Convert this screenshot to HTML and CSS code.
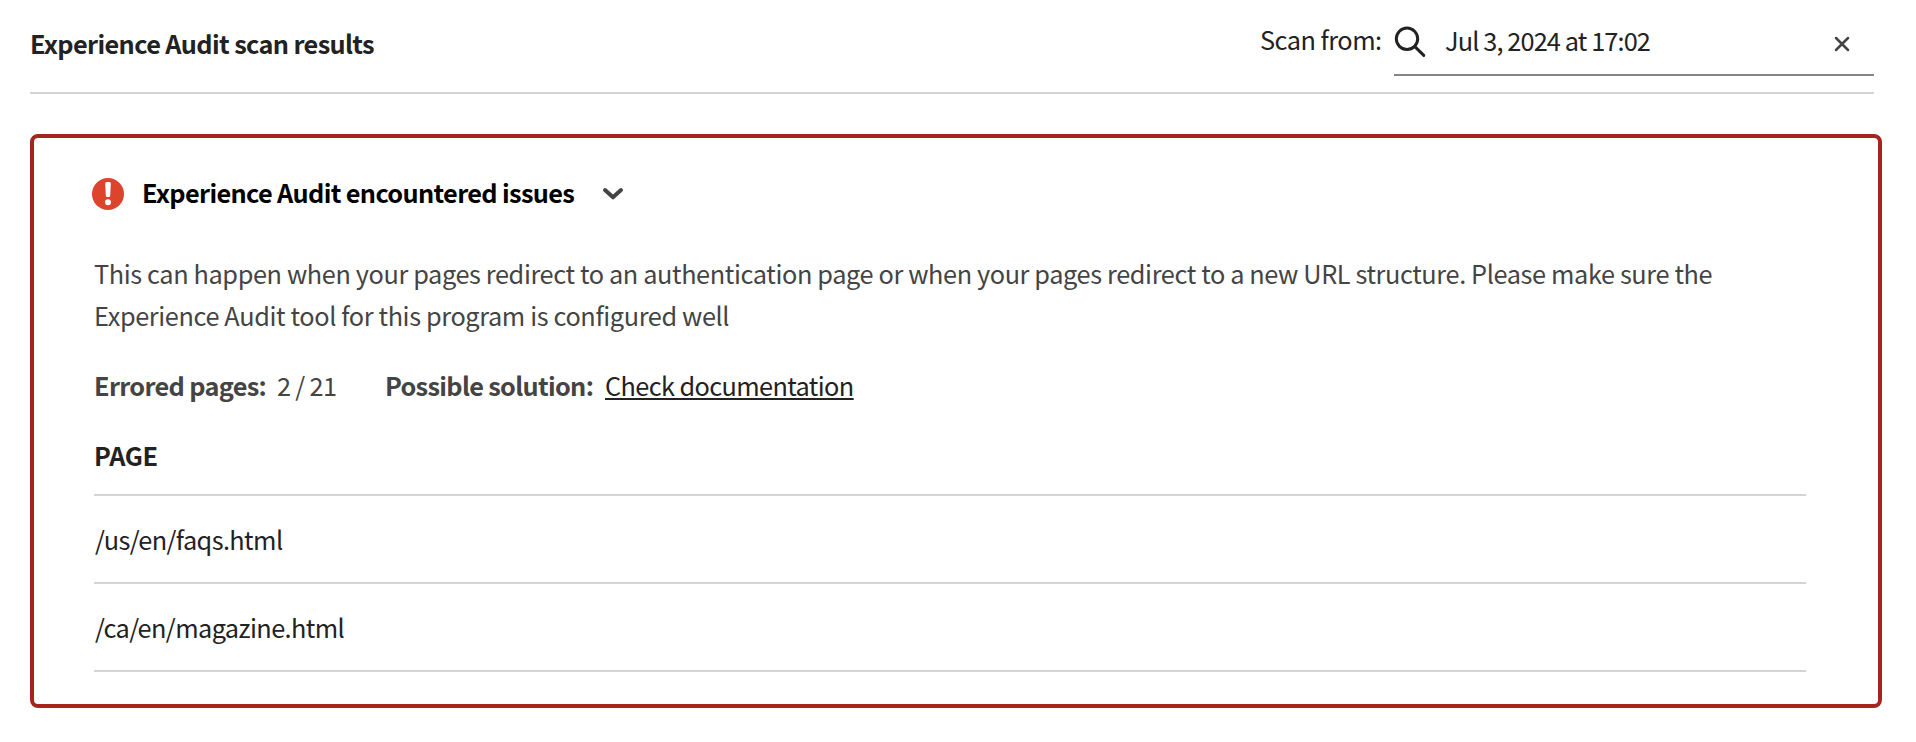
FILE: index.html
```html
<!DOCTYPE html>
<html lang="en">
<head>
<meta charset="utf-8">
<title>Experience Audit scan results</title>
<link rel="stylesheet" href="styles.css">
</head>
<body>
<header class="header">
  <h1 class="title">Experience Audit scan results</h1>
  <div class="scan">
    <span class="scan-label">Scan from:</span>
    <div class="field">
      <svg class="icon-search" width="32" height="32" viewBox="0 0 32 32" fill="none" stroke="#222" stroke-width="3" stroke-linecap="round"><circle cx="13" cy="12.8" r="10.7"/><path d="M20.8 20.6L29.8 29.4"/></svg>
      <span class="field-value">Jul 3, 2024 at 17:02</span>
      <svg class="icon-close" width="16" height="16" viewBox="0 0 16 16" fill="none" stroke="#444" stroke-width="2.5" stroke-linecap="round"><path d="M2 2L14 14M14 2L2 14"/></svg>
    </div>
  </div>
</header>
<main class="alert">
  <div class="alert-head">
    <svg class="icon-alert" width="32" height="32" viewBox="0 0 32 32"><circle cx="16" cy="16" r="16" fill="#dc442e"/><path d="M14.6 4h2.8a1.4 1.4 0 0 1 1.4 1.5l-.6 12.2a1.4 1.4 0 0 1-1.4 1.3h-1.6a1.4 1.4 0 0 1-1.4-1.3l-.6-12.2A1.4 1.4 0 0 1 14.6 4z" fill="#fff"/><circle cx="16" cy="24.3" r="3" fill="#fff"/></svg>
    <h2 class="alert-title">Experience Audit encountered issues</h2>
    <svg class="icon-chevron" width="22" height="14" viewBox="0 0 22 14" fill="none" stroke="#444" stroke-width="4" stroke-linecap="round" stroke-linejoin="round"><path d="M3 3L11 10.3L19 3"/></svg>
  </div>
  <p class="message">This can happen when your pages redirect to an authentication page or when your pages redirect to a new URL structure. Please make sure the<br>Experience Audit tool for this program is configured well</p>
  <div class="facts">
    <strong class="errored">Errored pages:</strong>
    <span class="count">2 / 21</span>
    <strong class="solution">Possible solution:</strong>
    <a class="doc-link">Check documentation</a>
  </div>
  <div class="table">
    <div class="cell cell-head">PAGE</div>
    <div class="cell">/us/en/faqs.html</div>
    <div class="cell">/ca/en/magazine.html</div>
  </div>
</main>
</body>
</html>
```
FILE: styles.css
```css
* { box-sizing: border-box; }
body {
  margin: 0;
  padding: 0 34px 0 30px;
  background: #fff;
  color: #222;
  font: 25.3px/42px "Noto Sans CJK SC", "Noto Sans", sans-serif;
  white-space: nowrap;
}
h1, h2, p { margin: 0; font-size: inherit; }
svg { display: block; flex: none; }
.header {
  display: flex;
  justify-content: space-between;
  width: 1844px;
  height: 94px;
  border-bottom: 2px solid #d4d4d4;
}
.title { padding-top: 22px; letter-spacing: -0.63px; }
.scan { display: flex; }
.scan-label { padding-top: 18px; width: 134px; letter-spacing: -0.5px; }
.field {
  display: flex;
  width: 480px;
  height: 76px;
  border-bottom: 2px solid #868686;
}
.icon-search { margin: 26px 19px 0 0; }
.field-value { padding-top: 19px; flex: 1; letter-spacing: -0.88px; }
.icon-close { margin: 36px 24px 0 0; }
.alert {
  margin-top: 40px;
  width: 1852px;
  height: 574px;
  padding: 33px 72px 0 60px;
  border: 4px solid #a6241d;
  border-radius: 8px;
}
.alert-head { display: flex; margin-left: -2px; height: 42px; color: #000; }
.icon-alert { margin: 7px 18px 0 0; }
.alert-title { width: 460px; letter-spacing: -0.65px; }
.icon-chevron { margin-top: 16px; }
.message { margin-top: 39px; color: #444; letter-spacing: -0.38px; }
.facts { display: flex; margin-top: 28px; color: #444; letter-spacing: -0.68px; }
.errored { width: 183px; }
.count { width: 108px; }
.solution { width: 220px; }
.doc-link {
  color: #222;
  letter-spacing: -0.61px;
  text-decoration: underline;
  text-decoration-thickness: 2px;
  text-underline-offset: 2px;
  text-decoration-skip-ink: none;
}
.table { margin-top: 28px; }
.cell {
  height: 88px;
  padding: 22px 0 0 1px;
  border-bottom: 2px solid #d4d4d4;
  letter-spacing: -0.59px;
}
.cell-head { height: 62px; padding: 0; font-weight: 700; letter-spacing: -0.3px; }
```
